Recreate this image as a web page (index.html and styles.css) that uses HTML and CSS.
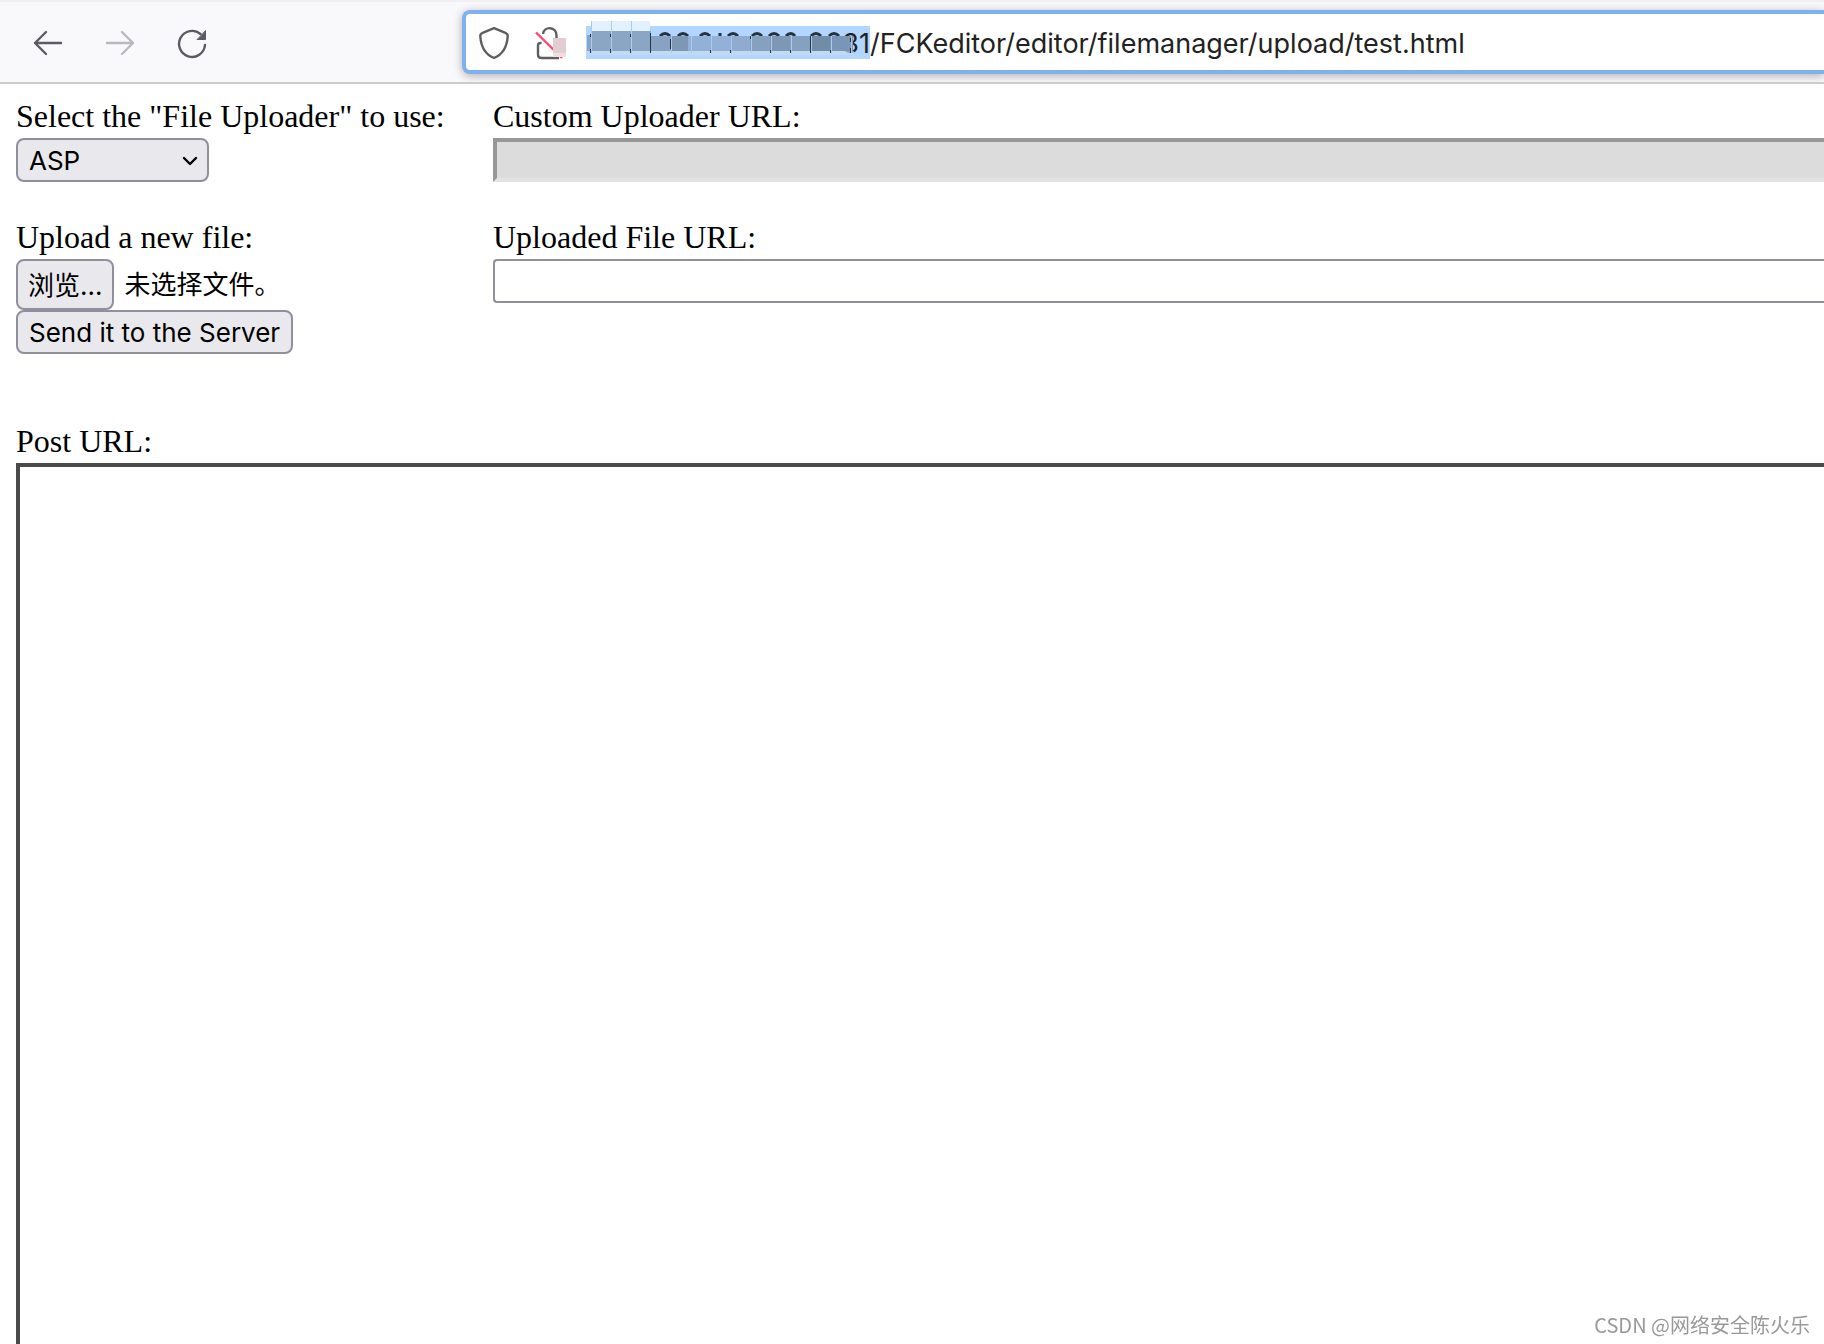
FILE: index.html
```html
<!DOCTYPE html>
<html lang="en">
<head>
    <meta charset="UTF-8">
    <meta name="viewport" content="width=device-width, initial-scale=1.0">
    <title>FCKeditor - Uploaders Tests</title>
    <link rel="stylesheet" href="styles.css">
</head>
<body>
    <header class="toolbar">
        <nav class="nav-buttons">
            <button type="button" class="nav-button" aria-label="Back">
                <svg width="32" height="32" viewBox="0 0 32 32"><path d="M29 16H3M14 5L3 16l11 11"/></svg>
            </button>
            <button type="button" class="nav-button" aria-label="Forward" disabled>
                <svg width="32" height="32" viewBox="0 0 32 32"><path d="M3 16h26M18 5l11 11-11 11"/></svg>
            </button>
            <button type="button" class="nav-button" aria-label="Reload">
                <svg width="32" height="32" viewBox="0 0 32 32"><path d="M29 18A13 13 0 1 1 24.500 7"/><path class="solid" d="M29.500 4V12.500H21.500z"/></svg>
            </button>
        </nav>
        <div class="urlbar">
            <svg class="shield" width="32" height="34" viewBox="0 0 32 34"><path d="M16 2.200L28 7.200Q30 8.200 29.700 10.500C29 20 26 28 16 32C6 28 3 20 2.300 10.500Q2 8.200 4 7.200z"/></svg>
            <svg class="lock" width="32" height="34" viewBox="0 0 32 34">
                <path d="M6.500 17H5.500Q3 17 3 19.500V28.500Q3 32 6.500 32H24M8 8C9 0 21.500 0 21.500 9.500V16.500"/>
                <path class="strike" d="M1 6.500L27 32"/>
                <path class="patch" d="M18 12H31V31H18z"/>
                <path class="patch-low" d="M18 27H31V31H18z"/>
            </svg>
            <div class="host">
                <svg class="mosaic" width="270" height="40" viewBox="0 0 270 40" aria-hidden="true">
                    <path fill="#e3f0fe" d="M5 0h59v10H5z"/>
                    <path class="marks" d="M74 15q5-5 10 0M92 15q5-5 10 0M114 15q5-5 10 0M134 12v3M142 15q5-5 10 0M166 15q5-5 10 0M183 15q5-5 10 0M200 15q5-5 9 0M225 15q5-5 10 0M243 15q5-5 10 0"/>
                    <path fill="#8ba5c4" d="M1 14h4v16H1zM5 10h60v20H5z"/>
                    <path fill="#8aa2c1" d="M65 15h20v15H65z"/>
                    <path fill="#7e97b4" d="M85 15h17v15H85zM184 15h20v15h-20z"/>
                    <path fill="#93b1d6" d="M102 15h43v15h-43z"/>
                    <path fill="#8facd0" d="M145 15h19v15h-19z"/>
                    <path fill="#86a0bf" d="M164 15h20v15h-20zM204 15h20v15h-20z"/>
                    <path fill="#728ca8" d="M224 15h20v15h-20z"/>
                    <path fill="#7a95b5" d="M244 15h23v15h-23z"/>
                    <path fill="#c8daf0" fill-opacity=".7" d="M1 30h267v4H1z"/>
                    <path stroke="#a9cbf2" d="M5.500 0v32M25.500 0v32M45.500 0v32M85.500 15v17M105.500 15v17M125.500 15v17M145.500 15v17M165.500 15v17M185.500 15v17M205.500 15v17M225.500 15v17M245.500 15v17M265.500 15v17"/>
                    <path stroke="#26323f" d="M4.500 13v3M4.500 28v4M24.500 13v3M24.500 28v4M44.500 13v3M44.500 28v4M64.500 12v20M84.500 18v10M124.500 29v3M144.500 29v3M164.500 15v3M184.500 29v3M204.500 29v3M224.500 15v17M244.500 29v3M264.500 17v4M264.500 27v5"/>
                </svg>
                <span class="port">31</span>
            </div>
            <input type="text" class="address" aria-label="Address" value="/FCKeditor/editor/filemanager/upload/test.html">
        </div>
    </header>

    <main class="page">
        <form class="uploader" id="frmUpload">
            <div class="field">
                <label for="cmbUploaderUrl">Select the "File Uploader" to use:</label>
                <div class="select-box">
                    <select id="cmbUploaderUrl">
                        <option selected>ASP</option>
                        <option>ASP.Net</option>
                        <option>ColdFusion</option>
                        <option>Lasso</option>
                        <option>Perl</option>
                        <option>PHP</option>
                        <option>(Custom)</option>
                    </select>
                    <svg class="chevron" width="16" height="12" viewBox="0 0 16 12"><path d="M2 3l6 6 6-6"/></svg>
                </div>
            </div>
            <div class="field">
                <label for="txtCustomUrl">Custom Uploader URL:</label>
                <input type="text" class="text-input" id="txtCustomUrl" disabled>
            </div>
            <div class="field">
                <label for="newFile">Upload a new file:</label>
                <div class="file-row">
                    <input type="file" id="newFile" name="NewFile" hidden>
                    <button type="button" class="button" id="browse" lang="zh-CN">浏览...</button>
                    <span id="fileName" lang="zh-CN">未选择文件。</span>
                </div>
                <button type="button" class="button">Send it to the Server</button>
            </div>
            <div class="field">
                <label for="txtUrl">Uploaded File URL:</label>
                <input type="text" class="text-input" id="txtUrl">
            </div>
        </form>
        <div class="result">
            <p>Post URL: <span id="eURL"></span></p>
            <iframe class="result-frame" name="UploadWindow" title="Upload result"></iframe>
        </div>
    </main>

    <div class="watermark" lang="zh-CN">CSDN @网络安全陈火乐</div>

    <script>
        const newFile = document.getElementById('newFile');

        document.getElementById('browse').addEventListener('click', function() {
            newFile.click();
        });

        newFile.addEventListener('change', function() {
            document.getElementById('fileName').textContent = newFile.files.length ? newFile.files[0].name : '未选择文件。';
        });
    </script>
</body>
</html>
```
FILE: styles.css
```css
:root {
    --toolbar-bg: #f9f9fb;
    --icon-color: #5b5b66;
    --focus-blue: #7fb0f0;
    --selection: #b1d6ff;
    --control-bg: #e9e9ed;
    --control-border: #8f8f9d;
    --ui-font: Inter, "Noto Sans CJK SC", sans-serif;
}

* {
    box-sizing: border-box;
}

body {
    margin: 0;
    min-height: 100vh;
    display: flex;
    flex-direction: column;
    overflow: hidden;
    background: #fff;
    color: #000;
    font-family: "Liberation Serif", serif;
    font-size: 32px;
    line-height: 30px;
}

svg {
    flex: none;
    fill: none;
}

/* Browser toolbar */
.toolbar {
    display: flex;
    align-items: center;
    height: 84px;
    padding-left: 12px;
    background: var(--toolbar-bg);
    border-top: 2px solid #f0f0f3;
    border-bottom: 2px solid #ccc;
    overflow: hidden;
}

.nav-buttons {
    display: flex;
    width: 450px;
}

.nav-button {
    display: flex;
    justify-content: center;
    align-items: center;
    width: 72px;
    height: 64px;
    padding: 2px 0 0;
    border: none;
    background: none;
    stroke: var(--icon-color);
    stroke-width: 2.4;
    stroke-linecap: round;
    stroke-linejoin: round;
}

.nav-button:disabled {
    opacity: 0.4;
}

.nav-button .solid {
    fill: var(--icon-color);
    stroke-width: 1;
}

.urlbar {
    flex: 1;
    display: flex;
    align-items: center;
    height: 64px;
    padding: 1px 0 0 12px;
    background: #fff;
    border: 4px solid var(--focus-blue);
    border-right: none;
    border-radius: 8px 0 0 8px;
    box-shadow: 0 2px 10px rgba(0, 0, 0, 0.3);
    font-family: var(--ui-font);
    font-size: 27px;
    color: #222;
}

.shield,
.lock {
    stroke: #5e5e5e;
    stroke-width: 2.4;
    stroke-linejoin: round;
}

.lock {
    margin-left: 25px;
}

.lock .strike {
    stroke: #ff4570;
}

.lock .patch {
    fill: #e2cdd2;
    stroke: none;
}

.lock .patch-low {
    fill: #efdee2;
    stroke: none;
}

.host {
    position: relative;
    display: flex;
    justify-content: flex-end;
    width: 284px;
    height: 33px;
    margin-left: 19px;
    line-height: 35px;
    background: var(--selection);
}

/* Pixelated patch over the host */
.mosaic {
    position: absolute;
    left: 0;
    top: -5px;
}

.mosaic .marks {
    stroke: #26323f;
    stroke-width: 3;
}

.address {
    flex: 1;
    min-width: 0;
    padding: 2px 0 0;
    border: none;
    outline: none;
    background: none;
    font: inherit;
    color: inherit;
}

/* Test page */
.page {
    flex: 1;
    display: flex;
    flex-direction: column;
    padding: 17px 0 0 16px;
}

.uploader {
    display: grid;
    grid-template-columns: 477px 1fr;
    row-gap: 40px;
}

.field {
    display: flex;
    flex-direction: column;
    align-items: flex-start;
}

label,
.result p {
    margin: 0;
    padding-bottom: 7px;
}

.select-box {
    position: relative;
}

select,
.button {
    height: 44px;
    padding: 0 11px;
    background: var(--control-bg);
    border: 2px solid var(--control-border);
    border-radius: 8px;
    font-family: var(--ui-font);
    font-size: 26px;
    color: #000;
}

select {
    display: block;
    appearance: none;
    width: 193px;
}

.chevron {
    position: absolute;
    right: 11px;
    top: 17px;
    stroke: #000;
    stroke-width: 2.4;
    stroke-linecap: round;
    stroke-linejoin: round;
    pointer-events: none;
}

.text-input {
    width: 100%;
    height: 44px;
    border: 2px solid var(--control-border);
    border-right: none;
    border-radius: 4px 0 0 4px;
    background: #fff;
    font-family: var(--ui-font);
    font-size: 26px;
}

.text-input:disabled {
    border-width: 4px;
    border-style: solid;
    border-color: #979797 #e3e3e3 #e3e3e3 #979797;
    border-right: none;
    border-radius: 0;
    background: #dcdcdc;
}

.file-row {
    display: flex;
    align-items: center;
    gap: 10px;
    font-family: var(--ui-font);
    font-size: 26px;
}

.file-row .button {
    height: 51px;
    padding: 0 10px 2px;
}

.result {
    flex: 1;
    display: flex;
    flex-direction: column;
    padding-top: 72px;
}

.result-frame {
    flex: 1;
    width: 100%;
    border: 4px solid #4a4a4a;
    border-right: none;
    border-bottom: none;
}

.watermark {
    position: fixed;
    right: 14px;
    bottom: 4px;
    font-family: "Noto Sans CJK SC", sans-serif;
    font-size: 20px;
    line-height: 30px;
    color: #999;
}
```
